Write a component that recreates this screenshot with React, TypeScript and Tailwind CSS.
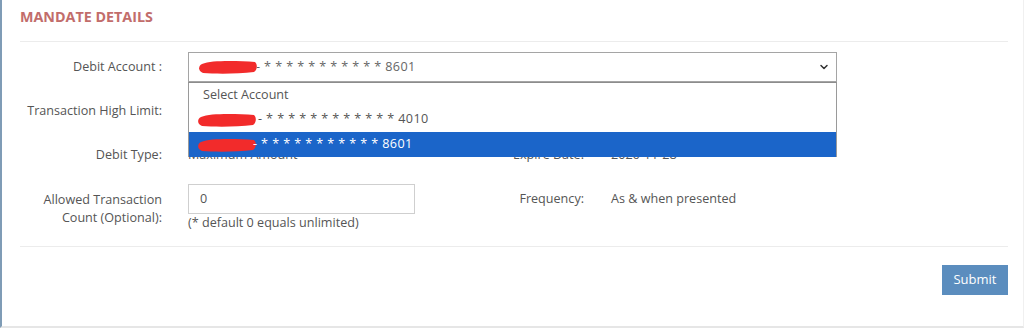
import { ChevronDown } from 'lucide-react';

const Redacted = ({ className = '' }: { className?: string }) => (
    <svg width="60" height="16" viewBox="0 0 60 16" className={className}>
        <path d="M4 5 C14 1, 40 2, 57 3 C60 6, 59 11, 56 13 C40 15, 18 15, 5 14 C0 12, 0 7, 4 5 Z" fill="#f22b2b" />
    </svg>
);

const Label = ({ children }: { children: React.ReactNode }) => (
    <div className="w-[142px] shrink-0 text-right leading-[18px]">{children}</div>
);

const App = () => {
    return (
        <div className="h-[328px] w-[1024px] border-b-2 border-l-2 border-r border-b-[#e6e6e6] border-l-[#7f9cb6] border-r-[#f0f0f0] bg-white pl-[18px] pr-[15px] text-[12.6px] text-[#555] [font-family:'Open_Sans',sans-serif]">
            {/* Header */}
            <div className="h-[42px] border-b border-[#ececec] pt-[7px]">
                <h3 className="text-[14.3px] leading-[20px] font-bold uppercase text-[#c26d6b]">Mandate Details</h3>
            </div>

            {/* Form */}
            <div className="relative flex flex-col pt-[10px]">
                {/* Debit account */}
                <div className="flex h-[30px] items-center">
                    <Label>Debit Account :</Label>
                    <div className="ml-[26px] flex h-[30px] w-[649px] items-center border border-[#a5a5a5] pl-[9px] pr-[6px]">
                        <Redacted />
                        <span className="-ml-[2px] tracking-[0.4px] text-[#666]">- * * * * * * * * * * * 8601</span>
                        <ChevronDown className="ml-auto h-[12px] w-[12px] text-[#333]" strokeWidth={3} />
                    </div>
                </div>

                {/* Transaction high limit */}
                <div className="mt-[14px] flex h-[30px] items-center">
                    <Label>Transaction High Limit:</Label>
                </div>

                {/* Debit type / expire date */}
                <div className="mt-[14px] flex h-[30px] items-center">
                    <Label>Debit Type:</Label>
                    <div className="ml-[26px] w-[260px]">Maximum Amount</div>
                    <div className="w-[136px] text-right">Expire Date:</div>
                    <div className="ml-[27px]">2026-11-28</div>
                </div>

                {/* Allowed count / frequency */}
                <div className="mt-[14px] flex items-start">
                    <div className="mt-[7px]">
                        <Label>
                            Allowed Transaction
                            <br />
                            Count (Optional):
                        </Label>
                    </div>
                    <div className="ml-[26px] w-[260px]">
                        <div className="flex h-[30px] w-[227px] items-center border border-[#cfcfcf] px-[11px]">0</div>
                        <div className="leading-[18px]">(* default 0 equals unlimited)</div>
                    </div>
                    <div className="mt-[6px] w-[136px] text-right leading-[18px]">Frequency:</div>
                    <div className="mt-[6px] ml-[27px] leading-[18px]">As &amp; when presented</div>
                </div>

                {/* Open dropdown list */}
                <div className="absolute left-[168px] top-[40px] w-[649px] border-x border-[#9a9a9a] border-t border-t-[#8c8c8c] bg-white text-[#555]">
                    <div className="flex h-[24px] items-center pl-[14px]">Select Account</div>
                    <div className="flex h-[25px] items-center pl-[8px]">
                        <Redacted />
                        <span className="ml-[1px] tracking-[0.4px]">- * * * * * * * * * * * * 4010</span>
                    </div>
                    <div className="flex h-[25px] items-center bg-[#1b65c9] pl-[8px] text-white">
                        <Redacted />
                        <span className="-ml-[4px] tracking-[0.4px]">- * * * * * * * * * * * 8601</span>
                    </div>
                </div>
            </div>

            <div className="mt-[14px] border-t border-[#ececec]" />

            <div className="mt-[18px] flex justify-end">
                <button className="h-[30px] w-[66px] bg-[#5b8dbe] text-[13px] text-white">Submit</button>
            </div>
        </div>
    );
};

export default App;
